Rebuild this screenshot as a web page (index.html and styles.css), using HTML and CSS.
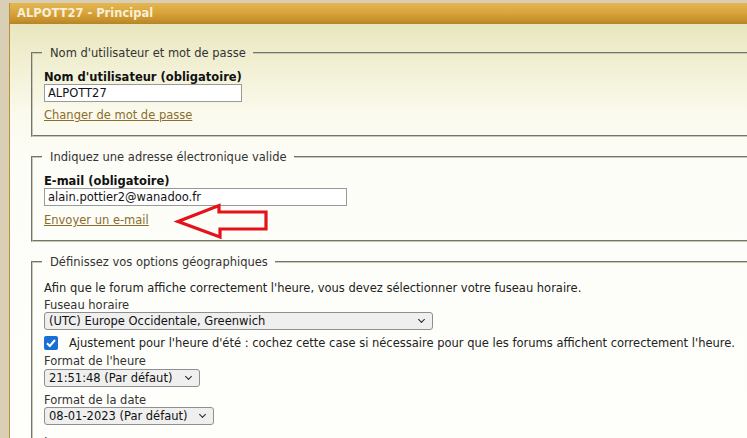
FILE: index.html
```html
<!DOCTYPE html>
<html lang="fr">
<head>
<meta charset="utf-8">
<title>ALPOTT27 - Principal</title>
<link rel="stylesheet" href="styles.css">
</head>
<body>
<div class="page">
  <div class="panel">
    <div class="panel-head">ALPOTT27 - Principal</div>
    <div class="panel-body">
      <fieldset class="group">
        <legend>Nom d'utilisateur et mot de passe</legend>
        <label class="field-label strong" for="username">Nom d'utilisateur (obligatoire)</label>
        <input class="text-input w-user" id="username" type="text" value="ALPOTT27">
        <a class="link" href="#">Changer de mot de passe</a>
      </fieldset>

      <fieldset class="group">
        <legend>Indiquez une adresse électronique valide</legend>
        <label class="field-label strong" for="email">E-mail (obligatoire)</label>
        <input class="text-input w-mail" id="email" type="text" value="alain.pottier2@wanadoo.fr">
        <div class="link-row">
          <a class="link" href="#">Envoyer un e-mail</a>
          <svg class="pointer-arrow" width="96" height="40" viewBox="0 0 96 40">
            <path d="M4 19.5 L45 3.5 L45 10 L92 10 L92 27 L46 27 L46 35 Z" fill="none" stroke="#e3121b" stroke-width="3.2" stroke-linejoin="miter"/>
          </svg>
        </div>
      </fieldset>

      <fieldset class="group geo">
        <legend>Définissez vos options géographiques</legend>
        <p class="hint">Afin que le forum affiche correctement l'heure, vous devez sélectionner votre fuseau horaire.</p>
        <label class="field-label" for="tz">Fuseau horaire</label>
        <div class="select w-tz" id="tz">(UTC) Europe Occidentale, Greenwich<span class="chev"></span></div>
        <div class="check-row">
          <span class="checkbox"><svg width="14" height="14" viewBox="0 0 14 14"><path d="M3 7.2 L5.8 10 L11 4" fill="none" stroke="#fff" stroke-width="2"/></svg></span>
          <span>Ajustement pour l'heure d'été : cochez cette case si nécessaire pour que les forums affichent correctement l'heure.</span>
        </div>
        <label class="field-label gap-top" for="tf">Format de l'heure</label>
        <div class="select w-time tight" id="tf">21:51:48 (Par défaut)<span class="chev"></span></div>
        <label class="field-label gap-top" for="df">Format de la date</label>
        <div class="select w-date" id="df">08-01-2023 (Par défaut)<span class="chev"></span></div>
        <label class="field-label gap-top last">Langue</label>
      </fieldset>
    </div>
  </div>
</div>
</body>
</html>
```

FILE: styles.css
```css
html, body {
  margin: 0;
  padding: 0;
  background: #d9cfb4;
}

.page {
  box-sizing: border-box;
  width: 747px;
  height: 438px;
  overflow: hidden;
  padding: 3px 0 0 9px;
  font-family: "DejaVu Sans", Verdana, sans-serif;
  font-size: 11.5px;
  color: #222;
}

.panel {
  width: 800px;
  border-left: 1px solid #b98f37;
  background: linear-gradient(#e4e1b4 0px, #eeecca 45px, #fbfaee 112px, #fdfdf8 160px, #fefefb 100%);
  min-height: 460px;
}

.panel-head {
  height: 21px;
  line-height: 21px;
  padding-left: 7px;
  font-weight: bold;
  color: #f7efd6;
  background: linear-gradient(#e4b653 0%, #d9a53c 45%, #c8922c 80%, #b4832a 100%);
}

.panel-body {
  padding: 22px 0 0 21px;
  display: flex;
  flex-direction: column;
  gap: 13px;
}

.group {
  margin: 0;
  border: 2px groove #c9c7b6;
  border-right: none;
  padding: 11px 0 13px 11px;
  display: flex;
  flex-direction: column;
  align-items: flex-start;
}

.group legend {
  padding: 0 7px 0 8px;
  margin-left: -2px;
  line-height: 14px;
  color: #333;
}

.field-label {
  display: block;
  line-height: 13px;
  color: #333;
}

.field-label.strong {
  font-weight: bold;
  color: #111;
}

.text-input {
  font: inherit;
  color: #111;
  height: 18px;
  box-sizing: border-box;
  border: 1px solid #9a9a9a;
  background: #fff;
  padding: 0 3px;
  margin: 0;
}

.w-user { width: 198px; }
.w-mail { width: 303px; }

.link {
  color: #8a6d2c;
  text-decoration: underline;
  margin-top: 6px;
  line-height: 14px;
}

.link-row {
  display: flex;
  align-items: flex-start;
  position: relative;
}

.link-row .link {
  margin-top: 7px;
}

.pointer-arrow {
  position: absolute;
  left: 130px;
  top: -4px;
}

.hint {
  margin: 1px 0 0;
  line-height: 14px;
}

.geo .field-label:first-of-type {
  margin-top: 4px;
}

.select {
  position: relative;
  box-sizing: border-box;
  height: 18px;
  line-height: 16px;
  border: 1px solid #8f8f8f;
  border-radius: 3px;
  background: #efefef;
  padding: 0 0 0 4px;
  color: #111;
}

.chev {
  position: absolute;
  right: 8px;
  top: 4px;
  width: 4px;
  height: 4px;
  border-right: 1.5px solid #222;
  border-bottom: 1.5px solid #222;
  transform: rotate(45deg);
}

.w-tz { width: 389px; }
.w-time { width: 156px; }
.w-date { width: 170px; }

.tight {
  margin-top: 1px;
}

.check-row {
  display: flex;
  align-items: center;
  gap: 11px;
  margin-top: 6px;
  line-height: 14px;
}

.checkbox {
  width: 14px;
  height: 14px;
  border-radius: 2px;
  background: #1a6fd6;
  display: flex;
}

.field-label.gap-top {
  margin-top: 5px;
}

.select + .field-label.gap-top {
  margin-top: 7px;
}

.select + .field-label.last {
  margin-top: 11px;
}
```
